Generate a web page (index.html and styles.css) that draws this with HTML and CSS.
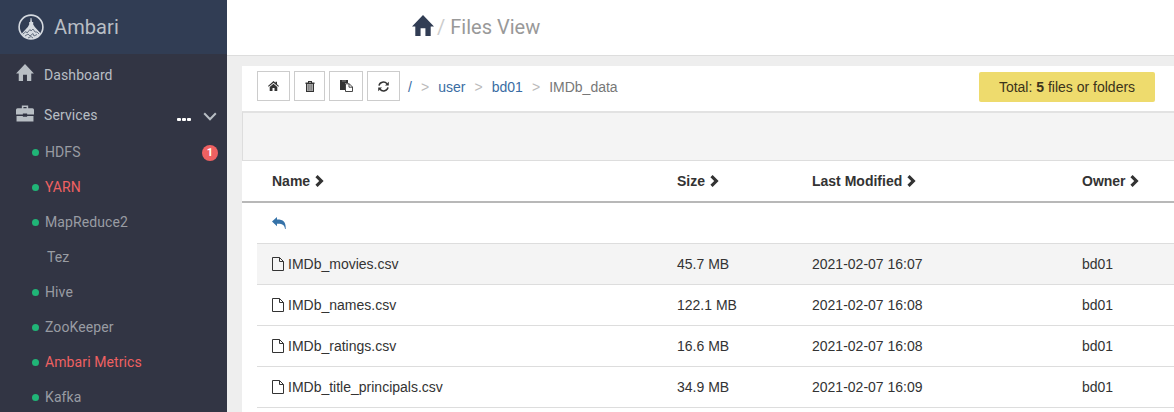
FILE: index.html
```html
<!DOCTYPE html>
<html lang="en">
<head>
<meta charset="utf-8">
<title>Ambari - Files View</title>
<link rel="stylesheet" href="styles.css">
</head>
<body>
<svg class="defs" width="0" height="0">
  <symbol id="home" viewBox="0 0 20 19"><path d="M10 0 20 10.5H17V19H12.2V12H7.8V19H3V10.5H0Z"/></symbol>
  <symbol id="chev" viewBox="0 0 9 12"><path d="M2.6 0 8.6 6 2.6 12 .4 9.8 4.2 6 .4 2.2Z"/></symbol>
  <symbol id="file" viewBox="0 0 12 14"><path d="M.5.5H7.5L11.5 4.5V13.5H.5ZM7.5.5V4.5H11.5" fill="none" stroke="currentColor"/></symbol>
</svg>
<div class="app">
  <nav class="sidebar">
    <div class="brand">
      <svg class="logo" viewBox="0 0 26 26"><circle cx="13" cy="13" r="11.9" fill="none" stroke="#d5dae0" stroke-width="1.6"/><path d="M12.6 4H13.4L14 8H15.2V10.5L16.8 13 22.8 19.5Q19 25 13 25T3.8 19.5L9.8 13 11.2 10.5V8H12.2Z" fill="#d5dae0"/><path d="M5 20 8 17.5 9 19 12 15.5 13 17 15 15 17 18 19 18 21 20M7 22 10 20 12 22 15 19.5 16 22 19 20.5M10 24 13 22.5 15 24" fill="none" stroke="#687383" stroke-width="1"/></svg>
      <span>Ambari</span>
    </div>
    <div class="main-item dashboard"><svg class="m-icon home-icon"><use href="#home"/></svg><span>Dashboard</span></div>
    <div class="main-item services">
      <svg class="m-icon case-icon" viewBox="0 0 17 16"><path d="M5.5 3V.5H11.5V3H15.5Q17 3 17 4.5V9H10.5V8H6.5V9H0V4.5Q0 3 1.5 3ZM7 3H10V1.8H7ZM.5 10.4H6.5V11H10.5V10.4H16.5V15.5H.5Z" fill-rule="evenodd"/></svg>
      <span>Services</span>
      <i class="more"><b></b><b></b><b></b></i>
      <svg class="down" viewBox="0 0 14 9"><path d="M1.2 1.2 7 7.2 12.8 1.2" fill="none" stroke="currentColor" stroke-width="2"/></svg>
    </div>
    <ul class="services-list">
      <li><i class="dot"></i><span>HDFS</span><b class="alert">1</b></li>
      <li class="red"><i class="dot"></i><span>YARN</span></li>
      <li><i class="dot"></i><span>MapReduce2</span></li>
      <li class="client"><span>Tez</span></li>
      <li><i class="dot"></i><span>Hive</span></li>
      <li><i class="dot"></i><span>ZooKeeper</span></li>
      <li class="red"><i class="dot"></i><span>Ambari Metrics</span></li>
      <li><i class="dot"></i><span>Kafka</span></li>
    </ul>
  </nav>
  <main class="content">
    <header class="topbar"><svg class="top-home"><use href="#home"/></svg><span class="slash">/</span><span>Files View</span></header>
    <section class="panel">
      <div class="toolbar">
        <button class="b1"><svg width="11" height="10" viewBox="0 0 11 10"><path d="M5.5 0 7.5 1.8V.8H9V3.2L11 5 10.3 5.8 5.5 1.7.7 5.8 0 5ZM5.5 2.7 9.3 6V10H6.5V7H4.5V10H1.7V6Z"/></svg></button>
        <button class="b2"><svg width="10" height="11" viewBox="0 0 10 11"><path d="M3 0H7V1.5H9.5V3H9V11H1V3H.5V1.5H3ZM4 1V1.5H6V1ZM2.2 3.2V9.8H7.8V3.2Z" fill-rule="evenodd"/><path d="M2 3H8V10H2Z" fill="#aaa"/><path d="M3.5 3.5V9.5M5 3.5V9.5M6.5 3.5V9.5" stroke="#777" stroke-width=".7"/></svg></button>
        <button class="b3"><svg width="13" height="12" viewBox="0 0 13 12"><path d="M0 0H8V3.2H5V10H0Z"/><path d="M2 1H6" stroke="#999" stroke-width=".8"/><path d="M5.5 3.8H9.3L12.5 7V11.5H5.5ZM9 3.8V7.2H12.5" fill="#fff" stroke="#333" stroke-width=".9"/></svg></button>
        <button class="b4"><svg width="11" height="11" viewBox="0 0 11 11"><path d="M1 4.6C1.7 1 6.5-.2 9 2.8M10 6.4C9.3 10 4.5 11.2 2 8.2" fill="none" stroke="#333" stroke-width="1.5"/><path d="M10.8.8V4.6H7ZM.2 10.2V6.4H4Z"/></svg></button>
        <div class="crumbs"><a>/</a><i>&gt;</i><a>user</a><i>&gt;</i><a>bd01</a><i>&gt;</i><span>IMDb_data</span></div>
        <div class="total">Total: <b>5</b> files or folders</div>
      </div>
      <div class="actions"></div>
      <div class="thead cols">
        <div>Name <svg class="chev"><use href="#chev"/></svg></div><div>Size <svg class="chev"><use href="#chev"/></svg></div><div>Last Modified <svg class="chev"><use href="#chev"/></svg></div><div>Owner <svg class="chev"><use href="#chev"/></svg></div>
      </div>
      <div class="rows">
        <div class="row up"><svg width="14" height="12" viewBox="0 0 14 12"><path d="M5 0V2.4C11 2.3 14 4.5 13.7 12H13C12.7 8 10.5 6.5 5 6.7V9.3L0 4.6Z"/></svg></div>
        <div class="row cols active"><div><svg class="file"><use href="#file"/></svg>IMDb_movies.csv</div><div>45.7 MB</div><div>2021-02-07 16:07</div><div>bd01</div></div>
        <div class="row cols"><div><svg class="file"><use href="#file"/></svg>IMDb_names.csv</div><div>122.1 MB</div><div>2021-02-07 16:08</div><div>bd01</div></div>
        <div class="row cols"><div><svg class="file"><use href="#file"/></svg>IMDb_ratings.csv</div><div>16.6 MB</div><div>2021-02-07 16:08</div><div>bd01</div></div>
        <div class="row cols"><div><svg class="file"><use href="#file"/></svg>IMDb_title_principals.csv</div><div>34.9 MB</div><div>2021-02-07 16:09</div><div>bd01</div></div>
      </div>
    </section>
  </main>
</div>
</body>
</html>
```
FILE: styles.css
```css
* { box-sizing: border-box; }
body { margin: 0; overflow: hidden; font: 14px/20px "Liberation Sans", Arial, sans-serif; color: #333; }
svg { fill: currentColor; flex: none; display: block; }
.defs { position: absolute; }
.app { display: flex; height: 412px; }
.sidebar { width: 227px; flex: none; background: #323544; color: #b8bec4; font-family: Roboto, sans-serif; letter-spacing: .1px; }
.brand { height: 54px; background: #313d54; display: flex; align-items: center; padding-left: 18px; font-size: 20px; }
.logo { width: 26px; height: 26px; margin-right: 10px; }
.main-item { height: 40px; display: flex; align-items: center; padding: 0 10px 0 16px; }
.main-item span { margin-left: 10px; }
.m-icon { width: 18px; height: 17px; }
.home-icon { margin-top: -4px; }
.case-icon { margin-top: -4px; }
.dashboard { height: 41px; }
.services { height: 40px; }
.more { display: flex; gap: 1px; margin: 9px 12px 0 auto; }
.more b { width: 4px; height: 3px; border-radius: 1px; background: #fff; }
.down { width: 14px; height: 9px; margin-top: 2px; }
.services-list { list-style: none; margin: -1px 0 0; padding: 0; color: #999ca3; }
.services-list li { height: 35px; display: flex; align-items: center; padding: 0 9px 0 32px; }
.services-list .client { padding-left: 47px; }
.services-list .red { color: #ef6162; }
.dot { width: 7px; height: 7px; border-radius: 50%; background: #20b577; margin: 2px 6px 0 0; }
.alert { margin-left: auto; width: 16px; height: 16px; border-radius: 50%; background: #ef6162; color: #fff; font-size: 11px; line-height: 16px; text-align: center; margin-top: 2px; }
.content { flex: 1; min-width: 0; background: #eee; }
.topbar { height: 56px; background: #fff; border-bottom: 1px solid #ddd; display: flex; align-items: center; padding: 0 0 1px 185px; font: 20px/28px Roboto, sans-serif; color: #999; }
.top-home { width: 22px; height: 21px; color: #313d54; margin: -4px 3px 0 0; }
.slash { color: #ccc; margin-right: 5px; }
.panel { margin: 10px 0 0 15px; background: #fff; height: 346px; }
.toolbar { height: 45px; display: flex; gap: 4px; padding: 5px 19px 0 15px; }
button { height: 30px; padding: 0; border: 1px solid #ccc; background: #fff; color: #333; display: flex; align-items: center; justify-content: center; }
.b1, .b4 { width: 33px; }
.b2 { width: 31px; }
.b3 { width: 34px; }
.crumbs { display: flex; margin: 6px 0 0 4px; color: #777; }
.crumbs a { color: #3a6da3; }
.crumbs i { font-style: normal; color: #bbb; width: 26.3px; text-align: center; }
.total { margin: 1px 0 0 auto; width: 176px; height: 30px; line-height: 30px; text-align: center; background: #eedb6d; border-radius: 2px; color: #3b331b; }
.actions { height: 50px; background: #f4f4f4; border: 1px solid #ddd; border-right: 0; border-top-width: 2px; border-top-color: #e2e2e2; }
.cols { display: grid; grid-template-columns: 405px 135px 270px 1fr; align-items: center; }
.cols > div { display: flex; align-items: center; white-space: pre; }
.thead { height: 42px; padding-left: 30px; font-weight: bold; border-bottom: 2px solid #b8b8b8; }
.chev { width: 9px; height: 12px; margin-left: 1px; }
.rows { margin-left: 15px; }
.row { height: 41px; padding-left: 15px; border-bottom: 1px solid #ddd; }
.up { display: flex; align-items: center; color: #3572a8; }
.active { background: #f4f4f4; }
.file { width: 12px; height: 14px; margin-right: 4px; }
```
